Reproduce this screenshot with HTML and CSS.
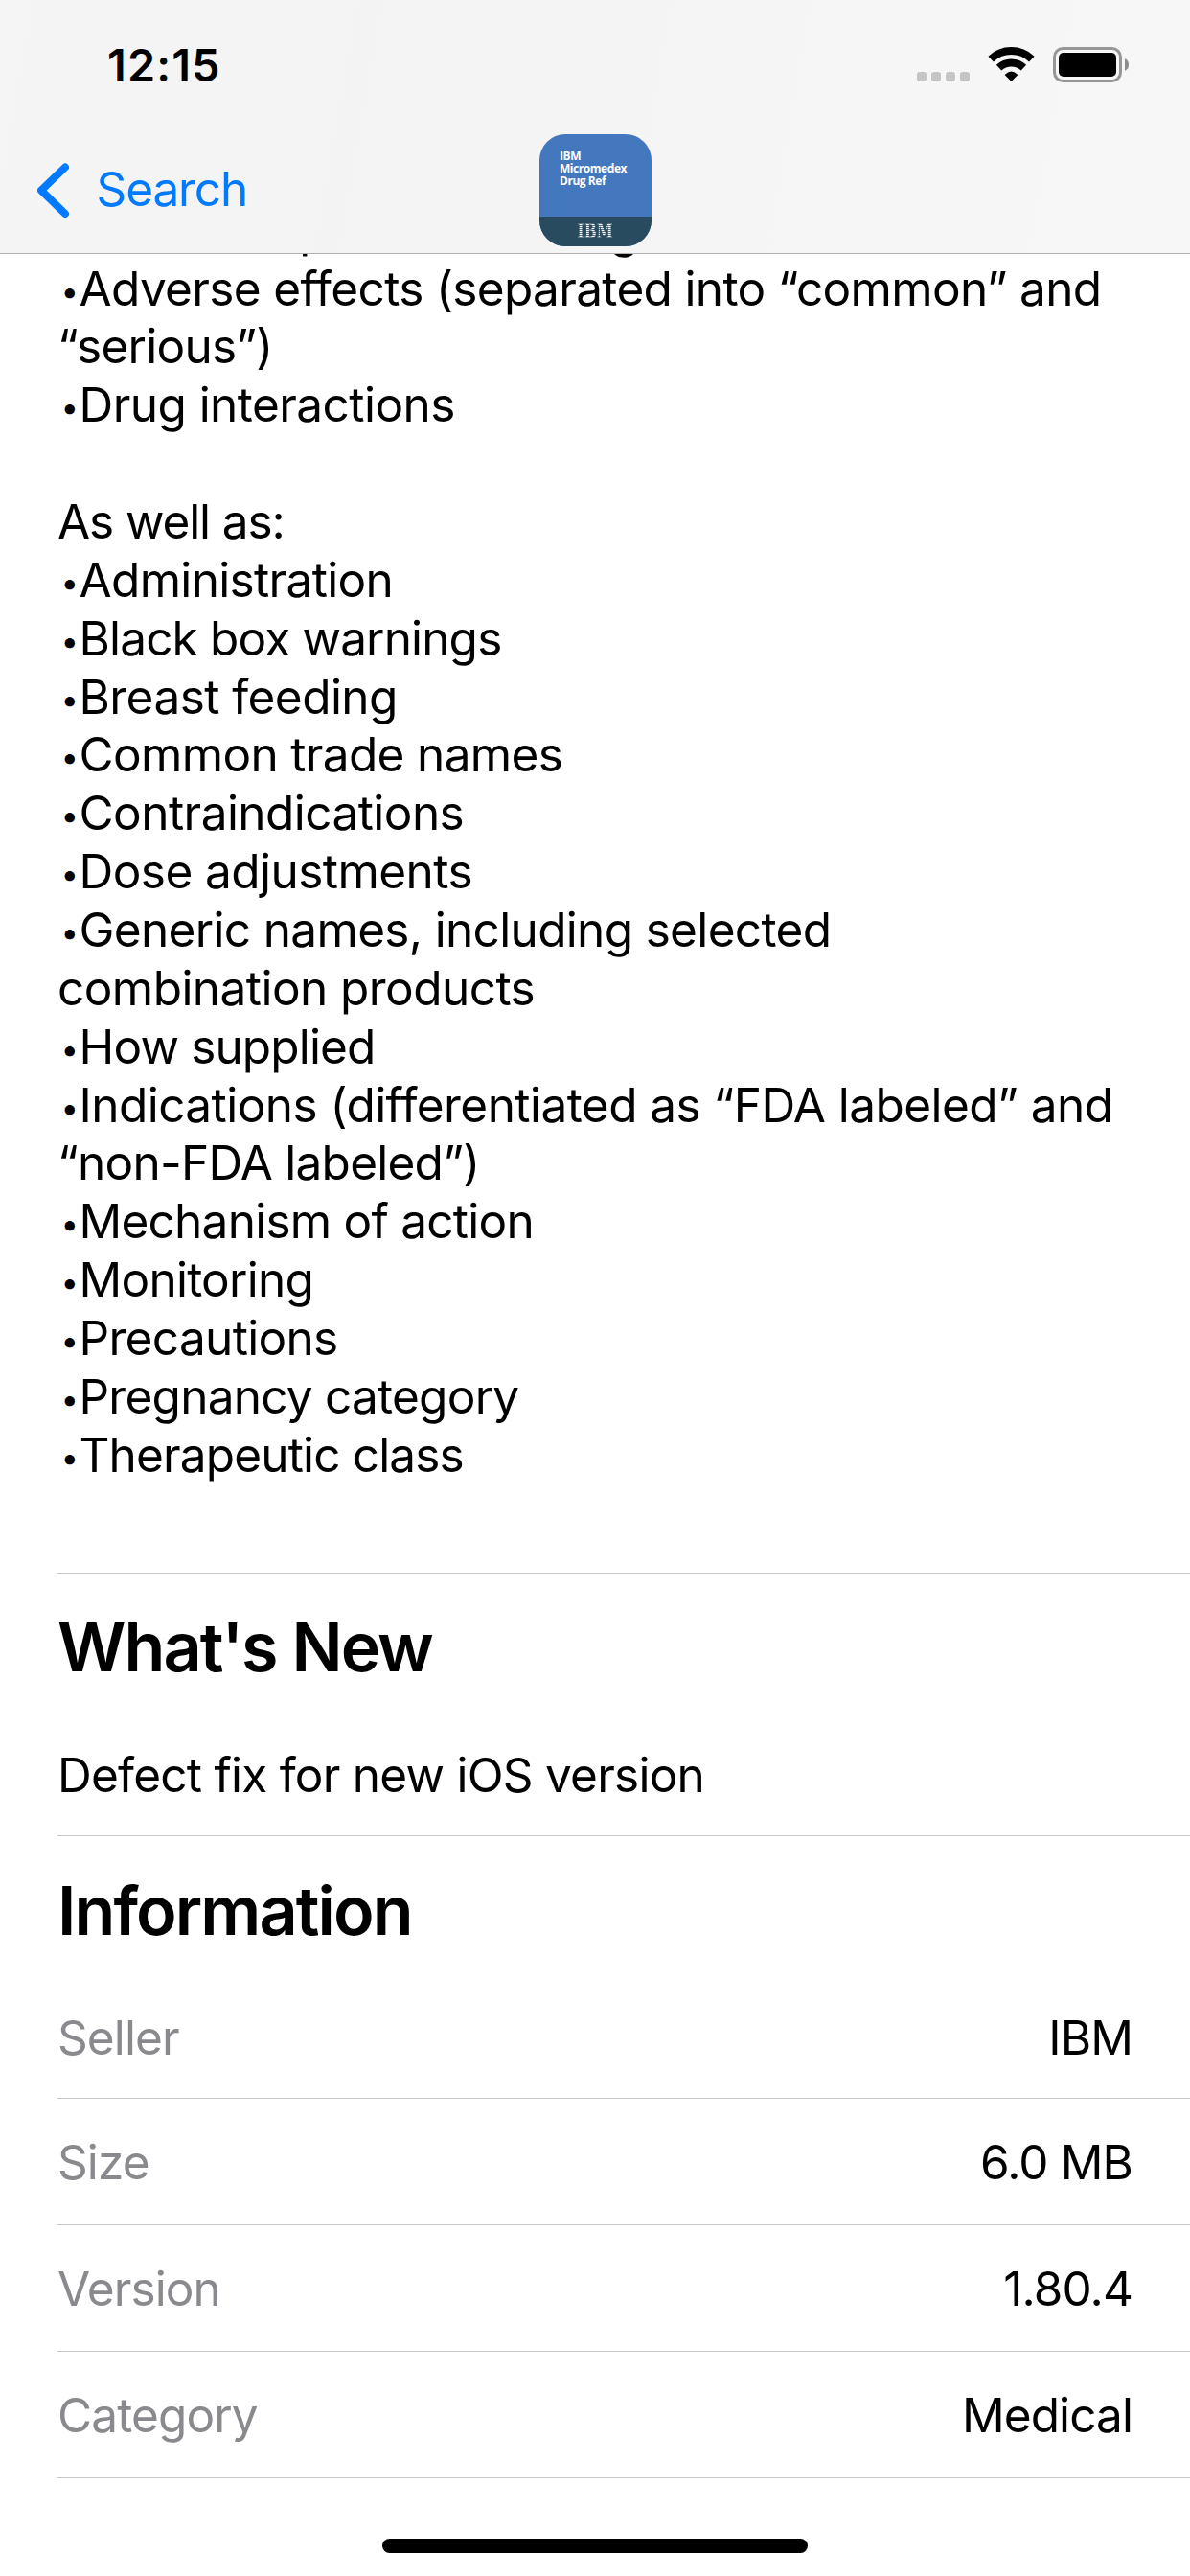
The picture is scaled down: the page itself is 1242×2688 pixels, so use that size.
FILE: index.html
```html
<!DOCTYPE html>
<html lang="en">
<head>
<meta charset="utf-8">
<title>IBM Micromedex Drug Ref</title>
<link rel="stylesheet" href="styles.css">
</head>
<body>
<div class="screen">
  <header class="header">
    <div class="status">
      <div class="time">12:15</div>
      <svg class="status-icons" width="230" height="60" viewBox="950 40 230 60">
        <g fill="#c5c5c5">
          <rect x="957" y="75" width="10" height="10" rx="3"/>
          <rect x="972" y="75" width="10" height="10" rx="3"/>
          <rect x="987" y="75" width="10" height="10" rx="3"/>
          <rect x="1002" y="75" width="10" height="10" rx="3"/>
        </g>
        <g fill="none" stroke="#000" stroke-width="8">
          <path d="M1034.200 61.600A31 31 0 0 1 1076.800 61.600"/>
          <path d="M1042.600 70.600A19 19 0 0 1 1068.400 70.600"/>
        </g>
        <path d="M1055.500 85L1048.600 78.100Q1055.500 71 1062.400 78.100Z"/>
        <rect x="1100.500" y="50.500" width="69" height="34" rx="9" fill="none" stroke="#969696" stroke-width="3"/>
        <rect x="1105" y="55" width="60" height="25" rx="5"/>
        <path d="M1174 61Q1178 63 1178 67.500T1174 74Z" fill="#8c8c8c"/>
      </svg>
    </div>
    <nav class="nav">
      <a class="back">
        <svg class="chevron" width="34" height="60" viewBox="39 168 34 60"><path d="M68 173.500L43 197.700L68 222" fill="none" stroke="#007aff" stroke-width="8" stroke-linecap="round" stroke-linejoin="round"/></svg>
        <span class="back-label">Search</span>
      </a>
      <div class="app-icon">
        <div class="app-name">IBM<br>Micromedex<br>Drug Ref</div>
        <div class="app-brand"><span class="stripes">IBM</span></div>
      </div>
    </nav>
  </header>

  <main class="content">
    <section class="description">
      <div class="line t15"><span class="dot">•</span>Adult and pediatric dosing</div>
      <div class="line t68"><span class="dot">•</span>Adverse effects (separated into “common” and</div>
      <div class="line t8">“serious”)</div>
      <div class="line t55"><span class="dot">•</span>Drug interactions</div>
      <div class="line">&nbsp;</div>
      <div class="line t11">As well as:</div>
      <div class="line t68"><span class="dot">•</span>Administration</div>
      <div class="line t85"><span class="dot">•</span>Black box warnings</div>
      <div class="line t55"><span class="dot">•</span>Breast feeding</div>
      <div class="line t68"><span class="dot">•</span>Common trade names</div>
      <div class="line t55"><span class="dot">•</span>Contraindications</div>
      <div class="line t55"><span class="dot">•</span>Dose adjustments</div>
      <div class="line t68"><span class="dot">•</span>Generic names, including selected</div>
      <div class="line t55">combination products</div>
      <div class="line t85"><span class="dot">•</span>How supplied</div>
      <div class="line t55"><span class="dot">•</span>Indications (differentiated as “FDA labeled” and</div>
      <div class="line t8">“non-FDA labeled”)</div>
      <div class="line t8"><span class="dot">•</span>Mechanism of action</div>
      <div class="line t8"><span class="dot">•</span>Monitoring</div>
      <div class="line t68"><span class="dot">•</span>Precautions</div>
      <div class="line t8"><span class="dot">•</span>Pregnancy category</div>
      <div class="line t85"><span class="dot">•</span>Therapeutic class</div>
    </section>
    <section class="whats-new">
      <h2 class="title">What's New</h2>
      <p class="note t8">Defect fix for new iOS version</p>
    </section>
    <section class="information">
      <h2 class="title">Information</h2>
      <dl class="rows">
        <div class="row"><dt>Seller</dt><dd>IBM</dd></div>
        <div class="row"><dt>Size</dt><dd>6.0 MB</dd></div>
        <div class="row"><dt>Version</dt><dd>1.80.4</dd></div>
        <div class="row"><dt>Category</dt><dd>Medical</dd></div>
      </dl>
    </section>
  </main>
  <div class="home-indicator"></div>
</div>
</body>
</html>
```
FILE: styles.css
```css
* { box-sizing: border-box; margin: 0; padding: 0; }

body {
  background: #fff;
  color: #000;
  font-family: Inter, "Liberation Sans", sans-serif;
  font-size: 49.5px;
  line-height: 61px;
}

.screen {
  width: 1242px;
  height: 2688px;
  display: flex;
  flex-direction: column;
  align-items: center;
  overflow: hidden;
}

.header {
  width: 100%;
  height: 265px;
  flex: none;
  background: linear-gradient(100deg, #f5f5f5, #f3f3f3 30%, #f6f6f6 70%, #f7f7f7);
  border-bottom: 1px solid #b0b0b0;
}

.status {
  height: 132px;
  padding: 40px 62px 0 112px;
  display: flex;
  justify-content: space-between;
}

.time { font-size: 46.8px; font-weight: 600; line-height: 56px; letter-spacing: 1.1px; }
.status-icons { flex: none; }

.nav {
  height: 132px;
  display: grid;
  grid-template-columns: 1fr 117px 1fr;
  padding: 8px 0 0 39px;
}
.nav .app-icon { margin-left: -19px; }

.back { display: flex; height: 117px; align-items: center; color: #007aff; }
.chevron { flex: none; }
.back-label { margin: 0 0 2px 27.5px; letter-spacing: -1.1px; }

.app-icon {
  width: 117px;
  height: 117px;
  border-radius: 27px;
  overflow: hidden;
  background: #4478be;
  color: #fff;
  display: flex;
  flex-direction: column;
}
.app-name {
  height: 86px;
  padding: 16px 0 0 21px;
  font: 700 12px/13px "Open Sans", sans-serif;
  letter-spacing: -0.45px;
  white-space: nowrap;
}
.app-brand {
  height: 31px;
  background: #284b60;
  text-align: center;
  font: 700 20px/31px "DejaVu Serif", serif;
}
.stripes {
  display: inline-block;
  transform: scaleX(0.77);
  background: repeating-linear-gradient(#fff 0 1px, #60798a 1px 2px);
  background-clip: text;
  -webkit-background-clip: text;
  color: transparent;
}

.content { width: 100%; height: 2384px; flex: none; overflow: hidden; padding-left: 60px; }

.description {
  height: 1377px;
  display: flex;
  flex-direction: column;
  border-bottom: 1px solid #c6c6c8;
}
.line { flex: none; height: 60.86px; line-height: 60.86px; white-space: nowrap; }
.line:first-child { margin-top: -55.3px; padding-left: 7px; }
.dot {
  display: inline-block;
  width: 22.5px;
  padding-left: 3.5px;
  font-size: 33px;
  line-height: 0;
  letter-spacing: 0;
  vertical-align: 3px;
}

/* tracking steps */
.t55 { letter-spacing: -0.55px; }
.t68 { letter-spacing: -0.66px; }
.t8 { letter-spacing: -0.75px; }
.t85 { letter-spacing: -0.84px; }
.t11 { letter-spacing: -1.1px; }
.t15 { letter-spacing: -1.5px; }

.title { font-size: 70px; font-weight: 620; line-height: 84px; letter-spacing: -1.9px; }
.whats-new { height: 274px; padding-top: 34.5px; border-bottom: 1px solid #c6c6c8; }
.note { margin-top: 61.7px; }
.information { padding-top: 35.5px; }
.rows { margin-top: 22.5px; }
.row {
  height: 132px;
  padding: 2px 60px 0 0;
  display: flex;
  justify-content: space-between;
  align-items: center;
  border-bottom: 1px solid #c6c6c8;
  letter-spacing: -0.9px;
}
.row:first-child { padding-top: 6px; }
.row dt { color: #8a8a8e; }

.home-indicator { width: 444px; height: 15px; border-radius: 8px; background: #000; }
```
